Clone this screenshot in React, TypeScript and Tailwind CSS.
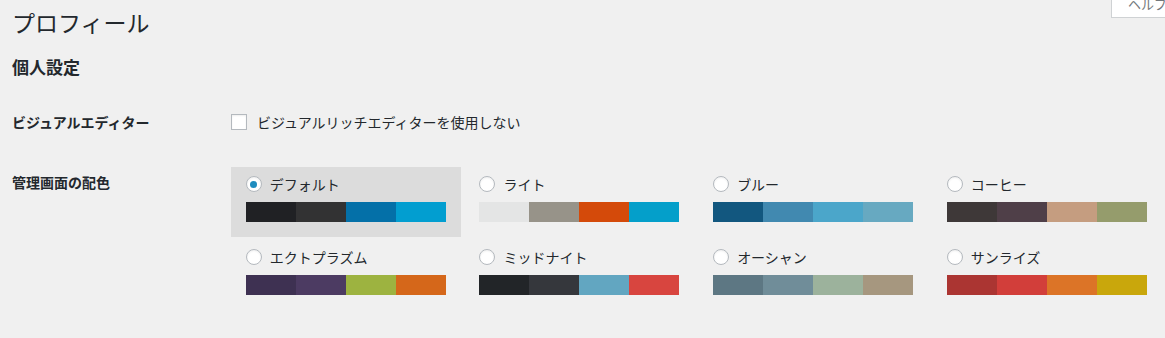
import React from "react";

type Scheme = { name: string; colors: string[]; selected?: boolean };

const schemes: Scheme[] = [
  { name: "デフォルト", colors: ["#202124", "#323233", "#0470a8", "#029ed0"], selected: true },
  { name: "ライト", colors: ["#e4e5e5", "#979389", "#d44a0a", "#049fca"] },
  { name: "ブルー", colors: ["#12577f", "#4189b0", "#4ba6ca", "#67a9c1"] },
  { name: "コーヒー", colors: ["#3e3838", "#4f3f48", "#c59d80", "#959c6c"] },
  { name: "エクトプラズム", colors: ["#3e3152", "#4c3b62", "#9db340", "#d5671a"] },
  { name: "ミッドナイト", colors: ["#222528", "#35373c", "#62a6c1", "#d8453f"] },
  { name: "オーシャン", colors: ["#5d7783", "#708d99", "#9cb29c", "#a6977f"] },
  { name: "サンライズ", colors: ["#ab3532", "#d23e3a", "#dc7427", "#c9a70c"] },
];

function Radio({ checked }: { checked?: boolean }) {
  return (
    <span className="flex h-[16px] w-[16px] shrink-0 items-center justify-center rounded-full border border-[#b4b9be] bg-white shadow-[inset_0_1px_2px_rgba(0,0,0,0.07)]">
      {checked && <span className="h-[7px] w-[7px] rounded-full bg-[#1e8cbe]" />}
    </span>
  );
}

function SchemeItem({ s }: { s: Scheme }) {
  return (
    <div
      className={
        "w-[230px] shrink-0 px-[15px] pt-[5px] pb-[15px] " +
        (s.selected ? "bg-[#dcdcdc]" : "")
      }
    >
      <div className="flex h-[24px] items-center">
        <Radio checked={s.selected} />
        <span className="ml-[8px] text-[14px] leading-[20px] text-[#23282d]">{s.name}</span>
      </div>
      <div className="mt-[6px] flex h-[20px]">
        {s.colors.map((c, i) => (
          <div key={i} className="h-full w-[50px]" style={{ backgroundColor: c }} />
        ))}
      </div>
    </div>
  );
}

export default function App() {
  return (
    <div className="relative h-[338px] w-full overflow-hidden bg-[#f0f0f0] font-['Noto_Sans_CJK_JP','Noto_Sans',sans-serif] text-[#23282d]">
      <div className="absolute right-0 top-0 h-[18px] w-[54px] overflow-hidden border-b border-l border-[#cfd2d4] bg-white pl-[16px]">
        <span className="-mt-[3px] block whitespace-nowrap text-[13px] leading-[13px] text-[#72777c]">ヘルプ</span>
      </div>

      <div className="pl-[12px]">
        <h1 className="pt-[8px] text-[23px] font-normal leading-[29px]">プロフィール</h1>
        <h2 className="mt-[19px] text-[17px] font-bold leading-[22px]">個人設定</h2>

        <div className="mt-[34px] flex">
          <div className="w-[219px] text-[14px] font-bold leading-[20px]">ビジュアルエディター</div>
          <label className="flex h-[20px] items-center">
            <span className="h-[16px] w-[16px] border border-[#b4b9be] bg-white shadow-[inset_0_1px_2px_rgba(0,0,0,0.07)]" />
            <span className="ml-[10px] text-[14px] leading-[20px]">ビジュアルリッチエディターを使用しない</span>
          </label>
        </div>

        <div className="mt-[35px] flex">
          <div className="w-[219px] pt-[5px] text-[14px] font-bold leading-[20px]">管理画面の配色</div>
          <div className="flex w-[935px] flex-wrap gap-x-[3.67px] gap-y-[3px]">
            {schemes.map((s) => (
              <SchemeItem key={s.name} s={s} />
            ))}
          </div>
        </div>
      </div>
    </div>
  );
}
